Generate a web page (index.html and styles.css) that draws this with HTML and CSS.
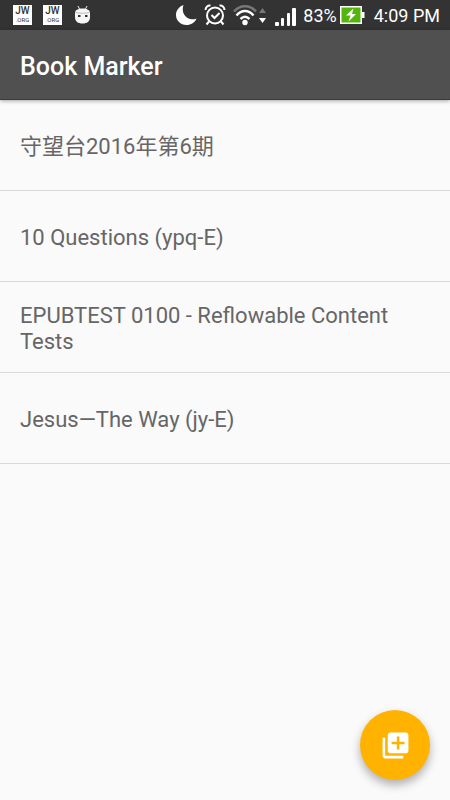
FILE: index.html
```html
<!DOCTYPE html>
<html lang="en">
<head>
<meta charset="utf-8">
<meta name="viewport" content="width=device-width, initial-scale=1">
<title>Book Marker</title>
<link rel="stylesheet" href="styles.css">
</head>
<body>
<div class="status-bar">
  <div class="notifications">
    <span class="jw"><b>JW</b><span>.ORG</span></span>
    <span class="jw"><b>JW</b><span>.ORG</span></span>
    <svg width="18" height="20" viewBox="0 0 18 20" aria-hidden="true">
      <path d="M5 1l2 4M14 1l-2 4" stroke="#eee" stroke-width="1"/>
      <path d="M2 8C2 5 5 3.500 9.500 3.500S17 5 17 8v4c0 4.500-3 6.500-7.500 6.500S2 16.500 2 12z" fill="#f6f6f6"/>
      <path d="M2.500 7.500c4 1 10 1 14 0" stroke="#bbb" stroke-width="1" fill="none"/>
      <path d="M5 11h2.500M12 11h2.500" stroke="#333" stroke-width="2"/>
    </svg>
  </div>
  <div class="system">
    <svg class="moon" width="21" height="20" viewBox="0 0 21 20" aria-hidden="true">
      <path d="M7.500 0C3 1.500 0 5.500 0 10c0 5.500 4.500 10 10.500 10 4.500 0 8.500-2.500 10-6.500-2 .8-3.500 1-5 .8C9 13.500 5 7 7.500 0z" fill="#fff"/>
    </svg>
    <svg class="alarm" width="22" height="22" viewBox="0 0 22 22" fill="none" stroke="#fff" aria-hidden="true">
      <circle cx="11" cy="11.500" r="8" stroke-width="2"/>
      <path d="M7.500 11l3 3 5-5" stroke-width="2"/>
      <path d="M1.500 6C1.500 3 4 1 6.500 1.500M20.500 6c0-3-2.500-5-5-4.500" stroke-width="2"/>
      <path d="M5 17.500L2.500 20.500M17 17.500l2.500 3" stroke-width="2"/>
    </svg>
    <svg class="wifi" width="33" height="22" viewBox="0 0 33 22" fill="none" aria-hidden="true">
      <path d="M1 7.500C7 .5 17 .5 23 7.500" stroke="#777" stroke-width="2.500"/>
      <path d="M3.500 11.500c5-6 12-6 17 0M7.500 15c3-3 6-3 9 0" stroke="#fff" stroke-width="2.500"/>
      <circle cx="12" cy="18.500" r="2.700" fill="#fff"/>
      <path d="M26 9l3.500-5L33 9z" fill="#777"/><path d="M26 14h7l-3.500 5z" fill="#fff"/>
    </svg>
    <svg class="signal" width="22" height="22" viewBox="0 0 22 22" fill="#fff" aria-hidden="true">
      <rect y="18" width="4" height="4" rx="1"/><rect x="6" y="14" width="3" height="8" rx="1"/><rect x="12" y="9" width="3" height="13" rx="1"/><rect x="17" y="4" width="4" height="18" rx="1"/>
    </svg>
    <span class="percent">83%</span>
    <svg class="battery" width="25" height="18" viewBox="0 0 25 18" aria-hidden="true">
      <rect x=".75" y=".75" width="20.500" height="16.500" fill="#55b50c" stroke="#fff" stroke-width="1.500"/>
      <rect x="22" y="6" width="2.500" height="6" fill="#fff"/>
      <path d="M13.500 2.500L6 9.500h4.500L8.500 15.500l7.500-7.500h-4z" fill="#fff"/>
    </svg>
    <time>4:09 PM</time>
  </div>
</div>
<header class="app-bar"><h1>Book Marker</h1></header>
<main>
  <ul class="books">
    <li lang="zh-Hans">守望台2016年第6期</li>
    <li>10 Questions (ypq-E)</li>
    <li>EPUBTEST 0100 - Reflowable Content Tests</li>
    <li>Jesus—The Way (jy-E)</li>
  </ul>
</main>
<button class="fab" type="button" aria-label="Add book">
  <svg width="31" height="31" viewBox="0 0 24 24" fill="#fff" aria-hidden="true">
    <path d="M4 6H2v14c0 1.100.9 2 2 2h14v-2H4V6zm16-4H8c-1.100 0-2 .9-2 2v12c0 1.100.9 2 2 2h12c1.100 0 2-.9 2-2V4c0-1.100-.9-2-2-2zm-1 9h-4v4h-2v-4H9V9h4V5h2v4h4v2z"/>
  </svg>
</button>
</body>
</html>
```
FILE: styles.css
```css
* {
  box-sizing: border-box;
}

body {
  margin: 0;
  min-height: 100vh;
  background: #fafafa;
  color: #666;
  font-family: Roboto, "Noto Sans CJK SC", sans-serif;
}

svg {
  display: block;
  flex: none;
}

.status-bar {
  display: flex;
  justify-content: space-between;
  align-items: center;
  height: 30px;
  padding: 0 10px 0 13px;
  background: #333;
  color: #fff;
  font-size: 18px;
}

.notifications,
.system {
  display: flex;
  align-items: center;
}

.notifications {
  gap: 11px;
}

.jw {
  display: flex;
  flex-direction: column;
  align-items: center;
  justify-content: center;
  width: 19px;
  height: 20px;
  background: #fff;
  color: #333;
  font-size: 6px;
  line-height: 8px;
}

.jw b {
  font-size: 10px;
  font-weight: 500;
  line-height: 10px;
}

.moon {
  margin-right: 7px;
}

.alarm {
  margin-right: 7px;
}

.wifi {
  margin-right: 9px;
}

.signal {
  margin-right: 6px;
}

.percent {
  margin-right: 3px;
}

.battery {
  margin-right: 9px;
}

.percent,
time {
  line-height: 30px;
  padding-top: 2px;
}

.app-bar {
  position: relative;
  display: flex;
  align-items: center;
  height: 70px;
  padding: 4px 20px 0;
  background: #505050;
  color: #fff;
  border-bottom: 1px solid #3a3a3a;
  box-shadow: 0 1px 4px rgba(0, 0, 0, 0.35);
}

h1 {
  margin: 0;
  font-size: 25px;
  font-weight: 500;
}

.books {
  margin: 0;
  padding: 0;
  list-style: none;
}

.books li {
  display: flex;
  align-items: center;
  min-height: 91px;
  padding: 16px 20px 12px;
  border-bottom: 1px solid #dadada;
  font-size: 22px;
  line-height: 26px;
}

.fab {
  position: fixed;
  right: 20px;
  bottom: 20px;
  display: flex;
  align-items: center;
  justify-content: center;
  width: 70px;
  height: 70px;
  padding: 0;
  border: 0;
  border-radius: 50%;
  background: #ffb300;
  box-shadow: 0 5px 10px rgba(0, 0, 0, 0.3);
}
```
